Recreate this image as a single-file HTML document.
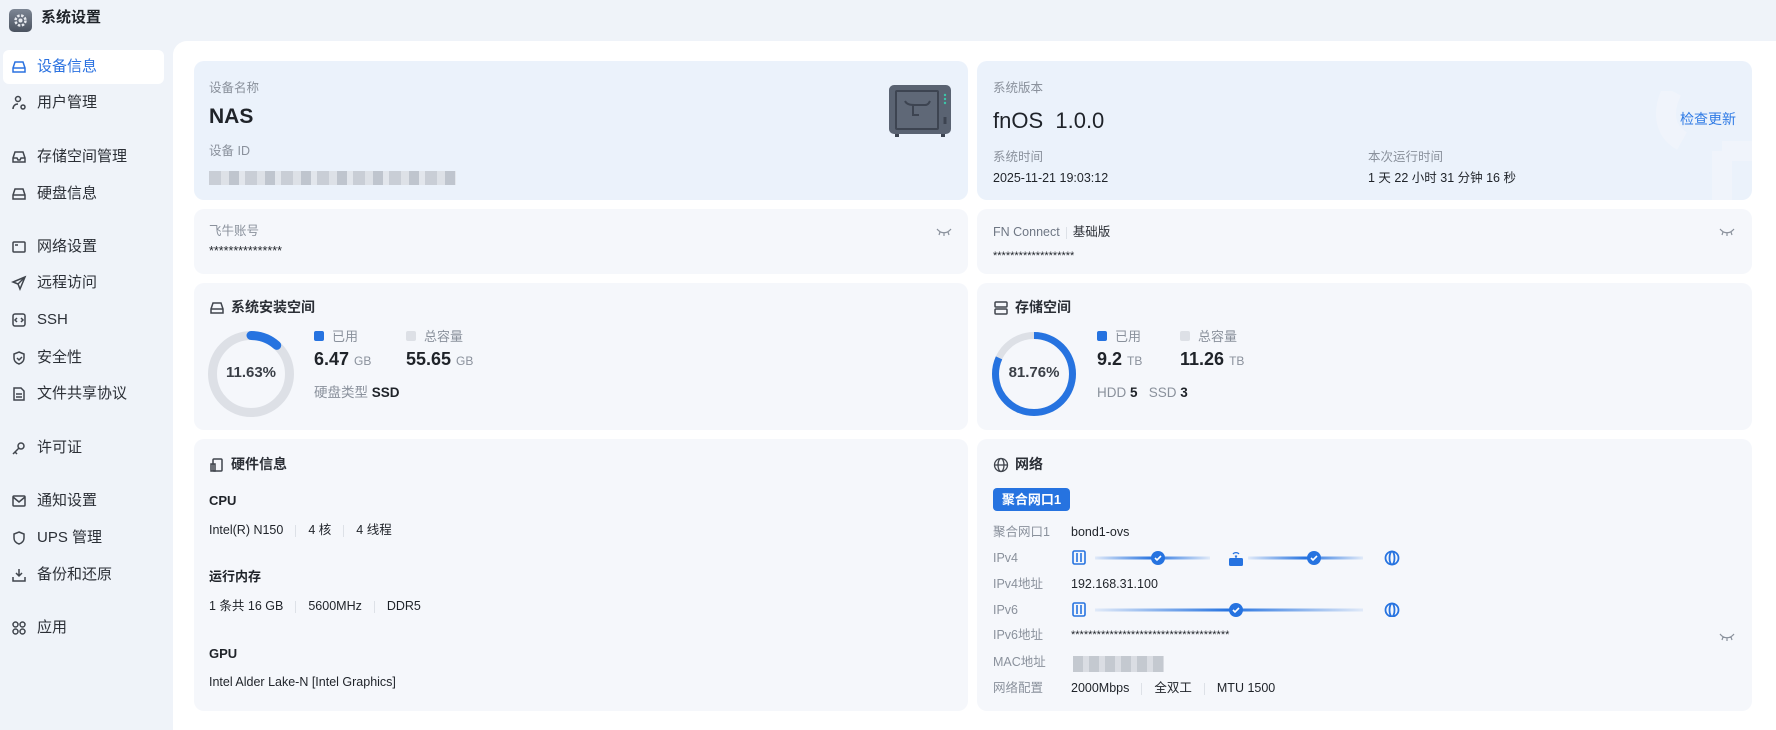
<!DOCTYPE html>
<html><head><meta charset="utf-8"><style>
*{box-sizing:border-box;margin:0;padding:0}
body{width:1776px;height:730px;overflow:hidden;background:#eff3f9;font-family:"Liberation Sans","Noto Sans CJK SC",sans-serif;color:#1f2329;position:relative;line-height:1.25}
.abs{position:absolute;white-space:nowrap}
.nav{position:absolute;left:11px;font-size:15px;color:#2b2f36;display:flex;align-items:center;gap:10px;height:20px}
.nav svg{width:16px;height:16px;stroke:#40454d;fill:none;stroke-width:1.5}
.panel{position:absolute;left:173px;top:41px;right:0;bottom:0;background:#fff;border-top-left-radius:14px}
.card{position:absolute;background:#f5f7fb;border-radius:10px}
.blue{background:#ebf2fb}
.lbl{color:#8a919c;font-size:12.5px;line-height:16px}
.val{color:#1f2329;font-size:12.5px;line-height:16px}
.h{font-size:14px;font-weight:bold;color:#2b2f36;display:flex;align-items:center;gap:6px}
.sep{display:inline-block;width:1px;height:12px;background:#dde1e7;margin:0 12px;vertical-align:middle}
.unit{font-size:12px;color:#8a919c;font-weight:normal}
.num{font-size:18px;font-weight:bold}
</style></head><body>
<div class="abs" style="left:9px;top:9px;width:23px;height:23px;border-radius:5px;background:linear-gradient(#7c8593,#4b5360)"><svg width="23" height="23" viewBox="0 0 23 23"><circle cx="11.5" cy="11.5" r="5" fill="none" stroke="#e6e9ee" stroke-width="2.5" stroke-dasharray="2.5 1.5"/><circle cx="11.5" cy="11.5" r="2" fill="#e6e9ee"/></svg></div>
<div class="abs" style="left:41px;top:9px;font-size:15px;font-weight:bold">系统设置</div>

<div class="abs" style="left:3px;top:50px;width:161px;height:34px;background:#fff;border-radius:6px"></div>
<div class="nav" style="top:57px;color:#2b72e0"><svg viewBox="0 0 16 16" style="stroke:#2b72e0"><path d="M2 9l2-6h8l2 6v4H2z M2 9h12"/></svg>设备信息</div>
<div class="nav" style="top:93px"><svg viewBox="0 0 16 16"><circle cx="7" cy="4" r="2.5"/><path d="M2 14c0-3 2-5 5-5"/><circle cx="12" cy="12" r="2"/></svg>用户管理</div>
<div class="nav" style="top:147px"><svg viewBox="0 0 16 16"><path d="M2 9l2-6h8l2 6v4H2z M2 9h4l1 2h2l1-2h4"/></svg>存储空间管理</div>
<div class="nav" style="top:184px"><svg viewBox="0 0 16 16"><path d="M2 9l2-6h8l2 6v4H2z M2 9h12"/></svg>硬盘信息</div>
<div class="nav" style="top:237px"><svg viewBox="0 0 16 16"><rect x="2" y="3" width="12" height="10" rx="1"/><path d="M4 6h3"/></svg>网络设置</div>
<div class="nav" style="top:273px"><svg viewBox="0 0 16 16"><path d="M14 2L2 7l5 2 2 5z M7 9l7-7"/></svg>远程访问</div>
<div class="nav" style="top:310px"><svg viewBox="0 0 16 16"><rect x="2" y="2" width="12" height="12" rx="2"/><path d="M6 6l-2 2 2 2M10 6l2 2-2 2"/></svg>SSH</div>
<div class="nav" style="top:348px"><svg viewBox="0 0 16 16"><path d="M8 2l5 2v4c0 3-2 5-5 6-3-1-5-3-5-6V4z M6 8l2 2 3-3"/></svg>安全性</div>
<div class="nav" style="top:384px"><svg viewBox="0 0 16 16"><path d="M3 2h7l3 3v9H3z M5 8h6M5 11h6"/></svg>文件共享协议</div>
<div class="nav" style="top:438px"><svg viewBox="0 0 16 16"><circle cx="10" cy="6" r="3"/><path d="M8 8l-6 6M4 12l2 2"/></svg>许可证</div>
<div class="nav" style="top:491px"><svg viewBox="0 0 16 16"><rect x="2" y="3" width="12" height="10" rx="1"/><path d="M2 4l6 5 6-5"/></svg>通知设置</div>
<div class="nav" style="top:528px"><svg viewBox="0 0 16 16"><path d="M8 2l5 2v4c0 3-2 5-5 6-3-1-5-3-5-6V4z"/></svg>UPS 管理</div>
<div class="nav" style="top:565px"><svg viewBox="0 0 16 16"><path d="M8 2v7M5 6l3 3 3-3M2 10v4h12v-4"/></svg>备份和还原</div>
<div class="nav" style="top:618px"><svg viewBox="0 0 16 16"><circle cx="4.5" cy="4.5" r="2.5"/><circle cx="11.5" cy="4.5" r="2.5"/><circle cx="4.5" cy="11.5" r="2.5"/><circle cx="11.5" cy="11.5" r="2.5"/></svg>应用</div>

<div class="panel"></div>

<!-- row1 left -->
<div class="card blue" style="left:194px;top:61px;width:774px;height:139px"></div>
<div class="abs lbl" style="left:209px;top:80px">设备名称</div>
<div class="abs" style="left:209px;top:104px;font-size:21px;font-weight:bold">NAS</div>
<div class="abs lbl" style="left:209px;top:143px">设备 ID</div>
<div class="abs" style="left:209px;top:171px;width:247px;height:14px;background:repeating-linear-gradient(90deg,#c9ced6 0 12px,#dde1e7 12px 20px,#bfc5ce 20px 30px,#e2e6ec 30px 36px)"></div>
<svg class="abs" style="left:889px;top:85px" width="62" height="52" viewBox="0 0 62 52"><rect x="0" y="0" width="62" height="49" rx="5" fill="#5a6372"/><rect x="6" y="5" width="44" height="40" rx="2" fill="#3d4451"/><rect x="8" y="7" width="40" height="36" fill="#5f6877"/><path d="M16 16c2 4 6 4 12 4h8c3 0 4-2 5-4M24 20v10h6" stroke="#3d4451" stroke-width="2" fill="none"/><circle cx="56" cy="10" r="1.2" fill="#3cc6a8"/><circle cx="56" cy="14" r="1.2" fill="#3cc6a8"/><circle cx="56" cy="18" r="1.2" fill="#3cc6a8"/><rect x="54.5" y="32" width="3" height="7" fill="#3d4451"/><rect x="6" y="49" width="4" height="3" fill="#3d4451"/><rect x="52" y="49" width="4" height="3" fill="#3d4451"/></svg>

<!-- row1 right -->
<div class="card blue" style="left:977px;top:61px;width:775px;height:139px;overflow:hidden"><svg style="position:absolute;right:0;top:30px" width="110" height="110" viewBox="0 0 110 110"><path d="M30 0c-10 20-8 40 10 50M80 60v60M80 60h30" stroke="#f0f4fb" stroke-width="20" fill="none"/></svg></div>
<div class="abs lbl" style="left:993px;top:80px">系统版本</div>
<div class="abs" style="left:993px;top:107px;font-size:22px;font-weight:500">fnOS&nbsp; 1.0.0</div>
<div class="abs" style="left:1680px;top:111px;font-size:14px;color:#2f7be5">检查更新</div>
<div class="abs lbl" style="left:993px;top:149px">系统时间</div>
<div class="abs val" style="left:993px;top:170px">2025-11-21 19:03:12</div>
<div class="abs lbl" style="left:1368px;top:149px">本次运行时间</div>
<div class="abs val" style="left:1368px;top:170px">1 天 22 小时 31 分钟 16 秒</div>

<!-- row2 -->
<div class="card" style="left:194px;top:209px;width:774px;height:65px"></div>
<div class="abs lbl" style="left:209px;top:223px">飞牛账号</div>
<div class="abs val" style="left:209px;top:243px">***************</div>
<svg class="abs" style="left:936px;top:227px" width="16" height="10" viewBox="0 0 16 10"><path d="M1 2c4 5 10 5 14 0M4 5l-1 3M8 6v3M12 5l1 3" stroke="#8a919c" fill="none" stroke-width="1.2"/></svg>
<div class="card" style="left:977px;top:209px;width:775px;height:65px"></div>
<div class="abs lbl" style="left:993px;top:224px;color:#6f7784">FN Connect<span class="sep" style="margin:0 6px"></span><span style="color:#2b2f36">基础版</span></div>
<div class="abs val" style="left:993px;top:248px;font-size:11px">*******************</div>
<svg class="abs" style="left:1719px;top:227px" width="16" height="10" viewBox="0 0 16 10"><path d="M1 2c4 5 10 5 14 0M4 5l-1 3M8 6v3M12 5l1 3" stroke="#8a919c" fill="none" stroke-width="1.2"/></svg>

<!-- row3 left -->
<div class="card" style="left:194px;top:283px;width:774px;height:147px"></div>
<div class="abs h" style="left:209px;top:299px"><svg width="16" height="16" viewBox="0 0 16 16" fill="none" stroke="#40454d" stroke-width="1.5"><path d="M2 9l2-6h8l2 6v4H2z M2 9h12"/></svg>系统安装空间</div>
<svg class="abs" style="left:208px;top:331px" width="86" height="86" viewBox="0 0 86 86"><circle cx="43" cy="43" r="38.5" fill="none" stroke="#dde0e6" stroke-width="9"/><circle cx="43" cy="43" r="38.5" fill="none" stroke="#2673e0" stroke-width="9" stroke-dasharray="28.1 300" transform="rotate(-90 43 43)" stroke-linecap="round"/></svg>
<div class="abs" style="left:208px;top:364px;width:86px;text-align:center;font-size:15px;font-weight:bold;color:#3a3f47">11.63%</div>
<div class="abs lbl" style="left:314px;top:329px;font-size:13px"><span style="display:inline-block;width:10px;height:10px;background:#2673e0;border-radius:2px;margin-right:8px"></span>已用</div>
<div class="abs lbl" style="left:406px;top:329px;font-size:13px"><span style="display:inline-block;width:10px;height:10px;background:#dde0e6;border-radius:2px;margin-right:8px"></span>总容量</div>
<div class="abs num" style="left:314px;top:348px">6.47 <span class="unit">GB</span></div>
<div class="abs num" style="left:406px;top:348px">55.65 <span class="unit">GB</span></div>
<div class="abs lbl" style="left:314px;top:385px;font-size:13.5px">硬盘类型 <span style="color:#1f2329;font-weight:bold">SSD</span></div>

<!-- row3 right -->
<div class="card" style="left:977px;top:283px;width:775px;height:147px"></div>
<div class="abs h" style="left:993px;top:299px"><svg width="16" height="16" viewBox="0 0 16 16" fill="none" stroke="#40454d" stroke-width="1.5"><rect x="2" y="2" width="12" height="5" rx="1"/><rect x="2" y="9" width="12" height="5" rx="1"/></svg>存储空间</div>
<svg class="abs" style="left:991px;top:331px" width="86" height="86" viewBox="0 0 86 86"><circle cx="43" cy="43" r="38.5" fill="none" stroke="#dde0e6" stroke-width="7"/><circle cx="43" cy="43" r="38.5" fill="none" stroke="#2673e0" stroke-width="7" stroke-dasharray="197.8 300" transform="rotate(-90 43 43)"/></svg>
<div class="abs" style="left:991px;top:364px;width:86px;text-align:center;font-size:15px;font-weight:bold;color:#3a3f47">81.76%</div>
<div class="abs lbl" style="left:1097px;top:329px;font-size:13px"><span style="display:inline-block;width:10px;height:10px;background:#2673e0;border-radius:2px;margin-right:8px"></span>已用</div>
<div class="abs lbl" style="left:1180px;top:329px;font-size:13px"><span style="display:inline-block;width:10px;height:10px;background:#dde0e6;border-radius:2px;margin-right:8px"></span>总容量</div>
<div class="abs num" style="left:1097px;top:348px">9.2 <span class="unit">TB</span></div>
<div class="abs num" style="left:1180px;top:348px">11.26 <span class="unit">TB</span></div>
<div class="abs lbl" style="left:1097px;top:385px;font-size:13.5px">HDD <span style="color:#1f2329;font-weight:bold">5</span>&nbsp;&nbsp; SSD <span style="color:#1f2329;font-weight:bold">3</span></div>

<!-- row4 left -->
<div class="card" style="left:194px;top:439px;width:774px;height:272px"></div>
<div class="abs h" style="left:209px;top:456px"><svg width="16" height="16" viewBox="0 0 16 16" fill="none" stroke="#40454d" stroke-width="1.5"><rect x="4" y="2" width="9" height="12" rx="1"/><rect x="2" y="7" width="4" height="7"/></svg>硬件信息</div>
<div class="abs" style="left:209px;top:493px;font-size:13px;font-weight:bold">CPU</div>
<div class="abs val" style="left:209px;top:522px">Intel(R) N150<span class="sep"></span>4 核<span class="sep"></span>4 线程</div>
<div class="abs" style="left:209px;top:569px;font-size:13px;font-weight:bold">运行内存</div>
<div class="abs val" style="left:209px;top:598px">1 条共 16 GB<span class="sep"></span>5600MHz<span class="sep"></span>DDR5</div>
<div class="abs" style="left:209px;top:646px;font-size:13px;font-weight:bold">GPU</div>
<div class="abs val" style="left:209px;top:674px">Intel Alder Lake-N [Intel Graphics]</div>

<!-- row4 right -->
<div class="card" style="left:977px;top:439px;width:775px;height:272px"></div>
<div class="abs h" style="left:993px;top:456px"><svg width="16" height="16" viewBox="0 0 16 16" fill="none" stroke="#40454d" stroke-width="1.3"><circle cx="8" cy="8" r="6.5"/><ellipse cx="8" cy="8" rx="3" ry="6.5"/><path d="M1.5 8h13"/></svg>网络</div>
<div class="abs" style="left:993px;top:488px;width:77px;height:23px;background:#2673e0;border-radius:4px;color:#fff;font-size:13px;font-weight:bold;text-align:center;line-height:23px">聚合网口1</div>
<div class="abs lbl" style="left:993px;top:524px">聚合网口1</div><div class="abs val" style="left:1071px;top:524px">bond1-ovs</div>
<div class="abs lbl" style="left:993px;top:550px">IPv4</div>
<div class="abs lbl" style="left:993px;top:576px">IPv4地址</div><div class="abs val" style="left:1071px;top:576px">192.168.31.100</div>
<div class="abs lbl" style="left:993px;top:602px">IPv6</div>
<div class="abs lbl" style="left:993px;top:627px">IPv6地址</div><div class="abs val" style="left:1071px;top:627px;font-size:11px">*************************************</div>
<svg class="abs" style="left:1719px;top:632px" width="16" height="10" viewBox="0 0 16 10"><path d="M1 2c4 5 10 5 14 0M4 5l-1 3M8 6v3M12 5l1 3" stroke="#8a919c" fill="none" stroke-width="1.2"/></svg>
<div class="abs lbl" style="left:993px;top:654px">MAC地址</div><div class="abs" style="left:1073px;top:656px;width:91px;height:16px;background:repeating-linear-gradient(90deg,#c4c9d0 0 10px,#dadde3 10px 16px)"></div>
<div class="abs lbl" style="left:993px;top:680px">网络配置</div><div class="abs val" style="left:1071px;top:680px">2000Mbps<span class="sep"></span>全双工<span class="sep"></span>MTU 1500</div>

<svg class="abs" style="left:1070px;top:547px" width="340" height="70" viewBox="0 0 340 70">
<defs><linearGradient id="g" x1="0" x2="1"><stop offset="0" stop-color="#2673e0" stop-opacity=".1"/><stop offset=".5" stop-color="#2673e0"/><stop offset="1" stop-color="#2673e0" stop-opacity=".1"/></linearGradient></defs>
<g fill="none" stroke="#2673e0" stroke-width="1.6"><rect x="3" y="4" width="12" height="13" rx="1.5"/><path d="M7 6v9M11 6v9"/><rect x="3" y="56" width="12" height="13" rx="1.5"/><path d="M7 58v9M11 58v9"/></g>
<rect x="25" y="9.5" width="115" height="3" fill="url(#g)"/><rect x="178" y="9.5" width="115" height="3" fill="url(#g)"/><rect x="25" y="61.5" width="268" height="3" fill="url(#g)"/>
<circle cx="88" cy="11" r="7" fill="#2673e0"/><path d="M85 11l2 2 4-4" stroke="#fff" stroke-width="1.6" fill="none"/>
<circle cx="244" cy="11" r="7" fill="#2673e0"/><path d="M241 11l2 2 4-4" stroke="#fff" stroke-width="1.6" fill="none"/>
<circle cx="166" cy="63" r="7" fill="#2673e0"/><path d="M163 63l2 2 4-4" stroke="#fff" stroke-width="1.6" fill="none"/>
<rect x="159" y="11" width="14" height="8" rx="1.5" fill="#2673e0"/><path d="M163 7a4 4 0 0 1 6 0M165 9.5a1.5 1.5 0 0 1 2 0" stroke="#2673e0" fill="none" stroke-width="1.3"/><path d="M166 9v3" stroke="#2673e0" stroke-width="1.3"/>
<g fill="none" stroke="#2673e0" stroke-width="1.8"><circle cx="322" cy="11" r="6.5"/><ellipse cx="322" cy="11" rx="2.5" ry="6.5"/><circle cx="322" cy="63" r="6.5"/><ellipse cx="322" cy="63" rx="2.5" ry="6.5"/></g>
</svg>
</body></html>
